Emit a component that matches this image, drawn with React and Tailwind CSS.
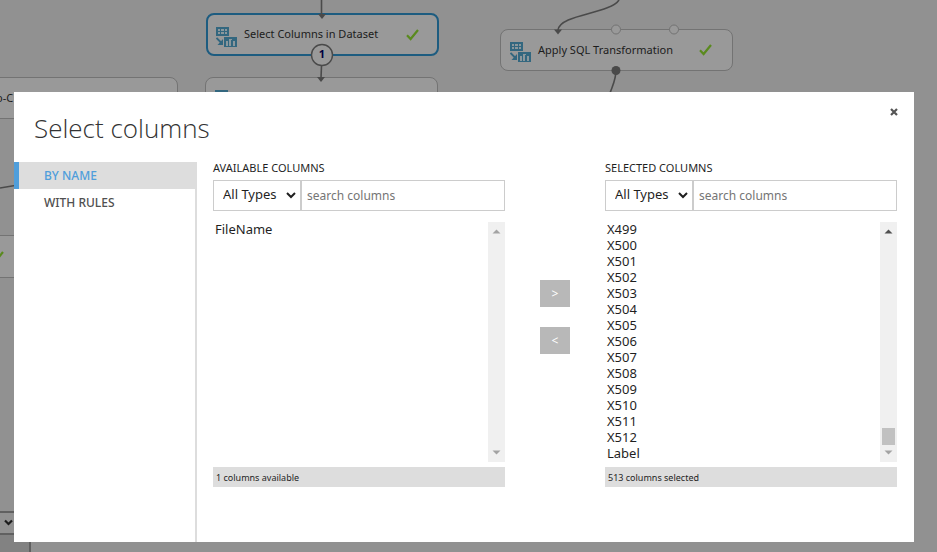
import React from "react";

const SELECTED = [
  "X499", "X500", "X501", "X502", "X503", "X504", "X505", "X506",
  "X507", "X508", "X509", "X510", "X511", "X512", "Label",
];

function DatasetIcon({ className }) {
  return (
    <svg className={className} width="21" height="20" viewBox="0 0 21 20" aria-hidden="true">
      <rect x="0" y="0" width="13" height="9" fill="#33677f" />
      <g fill="#8b979c">
        <rect x="2" y="2" width="2" height="2" />
        <rect x="5" y="2" width="3" height="2" />
        <rect x="9" y="2" width="2" height="2" />
        <rect x="2" y="5" width="2" height="2" />
        <rect x="5" y="5" width="3" height="2" />
        <rect x="9" y="5" width="2" height="2" />
      </g>
      <path d="M0.500 11 L5.500 16" stroke="#33677f" strokeWidth="1.800" fill="none" />
      <path d="M7 12 V18 H1.500 Z" fill="#33677f" />
      <rect x="8" y="10" width="13" height="10" fill="#33677f" />
      <g fill="#8b979c">
        <rect x="10" y="14" width="2" height="5" />
        <rect x="13" y="12" width="3" height="1" />
        <rect x="13" y="12" width="2" height="7" />
        <rect x="17" y="14" width="2" height="5" />
      </g>
    </svg>
  );
}

function Check() {
  return (
    <svg width="13" height="12" viewBox="0 0 13 12" aria-hidden="true">
      <path d="M1 6.200 L4.600 10 L12 1" fill="none" stroke="#5a8a1e" strokeWidth="2.200" />
    </svg>
  );
}

function CanvasNode({ label, className }) {
  return (
    <div className={`absolute flex items-center rounded-lg bg-[#999999] ${className}`}>
      <DatasetIcon className="mt-1 shrink-0" />
      <span className="ml-[7px] flex-1 whitespace-nowrap text-[11px] text-[#1c1c1c]">{label}</span>
      <Check />
    </div>
  );
}

function Canvas() {
  return (
    <div className="absolute inset-0 overflow-hidden bg-[#919191]" aria-hidden="true">
      <div className="absolute -left-14 top-[77px] flex h-[42px] w-[234px] items-center rounded-lg border border-[#737373] bg-[#999999] pl-[51px] text-[11px] text-[#1c1c1c]">
        o-C
      </div>
      <div className="absolute -left-52 top-[235px] flex h-[43px] w-[233px] items-center justify-end rounded-lg border border-[#737373] bg-[#999999] pr-5">
        <Check />
      </div>
      <div className="absolute left-0 top-[511px] flex h-[24px] w-[31px] items-center border-y-2 border-[#606060] bg-[#919191]">
        <svg className="ml-1" width="9" height="8" viewBox="0 0 9 8">
          <path d="M1 1.500 L4.500 5 L8 1.500" fill="none" stroke="#1c1c1c" strokeWidth="2.200" />
        </svg>
      </div>
      <div className="absolute bottom-0 left-0 top-[535px] w-[31px] border-r-2 border-[#606060] bg-[#828282]" />
      <CanvasNode label="Select Columns in Dataset" className="left-[206px] top-[13px] h-[43px] w-[233px] border-2 border-[#1d5c80] pl-2 pr-[18px]" />
      <div className="absolute left-[205px] top-[77px] h-[43px] w-[233px] rounded-lg border border-[#737373] bg-[#999999] pl-[9px] pt-3">
        <DatasetIcon />
      </div>
      <CanvasNode label="Apply SQL Transformation" className="left-[500px] top-[29px] h-[42px] w-[233px] border border-[#737373] pl-[9px] pr-5" />
      <svg className="absolute left-0 top-0" width="937" height="200" viewBox="0 0 937 200">
        <g fill="none" stroke="#4a4a4a" strokeWidth="1.600">
          <path d="M321.500 0 V14" />
          <path d="M321.500 66 L321 78" />
          <path d="M619 0 C610 14 560 14 558 30" />
          <path d="M616 70 C616 80 613 84 609 96" />
          <path d="M0 188 L15 185.500" />
        </g>
        <g fill="#4a4a4a">
          <path d="M318 14 H326 L322 19 Z" />
          <path d="M317 77 H325 L321 82 Z" />
          <path d="M554 29.500 H562 L558 34.500 Z" />
          <circle cx="616" cy="70.500" r="4.500" />
        </g>
        <g fill="#999999" stroke="#737373">
          <circle cx="616" cy="29.500" r="4.500" />
          <circle cx="674" cy="29.500" r="4.500" />
        </g>
        <circle cx="322" cy="55" r="10.500" fill="#999999" stroke="#4a4a4a" strokeWidth="1.400" />
        <text x="322" y="58" textAnchor="middle" className="fill-[#000040] text-[11px] font-bold">1</text>
      </svg>
    </div>
  );
}

function ScrollArrow({ up, dark }) {
  return (
    <svg width="9" height="5" viewBox="0 0 9 5" aria-hidden="true">
      <path d={up ? "M0.500 4.500 L4.500 0.500 L8.500 4.500 Z" : "M0.500 0.500 L4.500 4.500 L8.500 0.500 Z"} fill={dark ? "#505050" : "#a3a3a3"} />
    </svg>
  );
}

function ColumnList({ id, title, options, status, scrolled }) {
  return (
    <section className="flex min-w-0 flex-1 flex-col">
      <h2 id={`${id}-title`} className="h-[18px] text-[11px] leading-[12px] text-[#1f1f1f]">{title}</h2>
      <div className="flex h-[31px]">
        <div className="relative w-[88px] shrink-0">
          <select
            aria-label={`${title} type`}
            className="h-full w-full appearance-none rounded-none border border-[#cccccc] bg-white pb-[2px] pl-[9px] text-[13px] text-[#1f1f1f]"
          >
            <option>All Types</option>
          </select>
          <svg className="pointer-events-none absolute right-[5px] top-[12px]" width="10" height="7" viewBox="0 0 10 7" aria-hidden="true">
            <path d="M1 1 L5 5 L9 1" fill="none" stroke="#1f1f1f" strokeWidth="2" />
          </svg>
        </div>
        <input
          type="text"
          aria-label={`Search ${title}`}
          placeholder="search columns"
          className="min-w-0 flex-1 border border-[#cccccc] bg-white px-[5px] text-[12px] placeholder:text-[#757575]"
        />
      </div>
      <div className="mt-[11px] flex h-[240px]">
        <select
          multiple
          aria-labelledby={`${id}-title`}
          className="min-w-0 flex-1 overflow-hidden bg-white text-[13px] text-[#1f1f1f]"
        >
          {options.map((name) => (
            <option key={name} className="flex h-4 items-center px-[2px] pb-[2px] pt-0">{name}</option>
          ))}
        </select>
        <div className="flex w-[17px] flex-col items-center bg-[#f0f0f0] py-[7px]" aria-hidden="true">
          <ScrollArrow up dark={scrolled} />
          <div className="flex flex-1 flex-col justify-end pb-[5px]">
            {scrolled && <div className="h-[17px] w-[13px] bg-[#c1c1c1]" />}
          </div>
          <ScrollArrow />
        </div>
      </div>
      <p className="mt-[5px] h-[20px] bg-[#dddddd] px-[3px] text-[9px] leading-[21px] text-[#1f1f1f]">{status}</p>
    </section>
  );
}

export default function App() {
  return (
    <div className="relative min-h-screen overflow-hidden pb-[10px] pl-[14px] pr-[23px] pt-[92px] font-['Noto_Sans','Open_Sans',sans-serif]">
      <Canvas />
      <div role="dialog" aria-labelledby="dialog-title" className="relative flex min-h-[450px] flex-col bg-white">
        <header className="flex h-[70px] items-start justify-between pl-5 pr-4">
          <h1 id="dialog-title" className="pt-[18px] font-['Open_Sans',sans-serif] text-[26px] font-light leading-9 text-[#333333]">Select columns</h1>
          <button type="button" aria-label="Close" className="mt-4 flex h-2 w-2 items-center justify-center">
            <svg width="8" height="8" viewBox="0 0 8 8" aria-hidden="true">
              <path d="M1 1 L7 7 M7 1 L1 7" stroke="#555555" strokeWidth="2.200" />
            </svg>
          </button>
        </header>
        <div className="flex flex-1">
          <nav className="flex w-[183px] shrink-0 flex-col border-r-2 border-[#dddddd] text-[12px] font-medium">
            <a href="#by-name" className="-mr-[2px] flex h-[27px] items-center border-l-[5px] border-[#4f9edb] bg-[#dddddd] pl-[25px] text-[#4f9edb]">BY NAME</a>
            <a href="#with-rules" className="flex h-[27px] items-center pl-[30px] text-[#505050]">WITH RULES</a>
          </nav>
          <main className="flex flex-1 pl-4 pr-[17px]">
            <ColumnList id="available" title="AVAILABLE COLUMNS" options={["FileName"]} status="1 columns available" />
            <div className="flex w-[100px] shrink-0 flex-col items-center gap-5 pt-[118px]">
              <button type="button" className="h-[27px] w-[30px] bg-[#b8b8b8] text-[12px] text-white">&gt;</button>
              <button type="button" className="h-[27px] w-[30px] bg-[#b8b8b8] text-[12px] text-white">&lt;</button>
            </div>
            <ColumnList id="selected" title="SELECTED COLUMNS" options={SELECTED} status="513 columns selected" scrolled />
          </main>
        </div>
      </div>
    </div>
  );
}
